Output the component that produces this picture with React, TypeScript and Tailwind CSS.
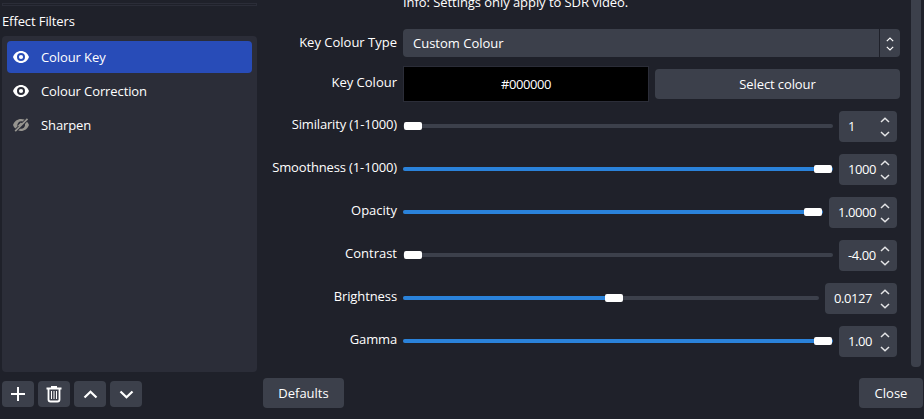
import { clsx } from 'clsx';

interface Filter {
  name: string;
  visible: boolean;
}

interface SliderSetting {
  label: string;
  value: string;
  percent: number;
  spinClass: string;
  labelClass: string;
}

const filters: Filter[] = [
  { name: 'Colour Key', visible: true },
  { name: 'Colour Correction', visible: true },
  { name: 'Sharpen', visible: false },
];

const settings: SliderSetting[] = [
  { label: 'Similarity (1-1000)', value: '1', percent: 0, spinClass: 'w-[58px]', labelClass: 'tracking-[-0.16px]' },
  { label: 'Smoothness (1-1000)', value: '1000', percent: 100, spinClass: 'w-[58px]', labelClass: 'tracking-[-0.14px]' },
  { label: 'Opacity', value: '1.0000', percent: 100, spinClass: 'w-[68px]', labelClass: '' },
  { label: 'Contrast', value: '-4.00', percent: 0, spinClass: 'w-[58px]', labelClass: '' },
  { label: 'Brightness', value: '0.0127', percent: 50.8, spinClass: 'w-[72px]', labelClass: 'tracking-[-0.1px]' },
  { label: 'Gamma', value: '1.00', percent: 100, spinClass: 'w-[58px]', labelClass: 'tracking-[-0.15px]' },
];

const buttonClass = 'flex items-center justify-center rounded-[4px] bg-[#3c404b]';

function Chevron({ up = false, className }: { up?: boolean; className?: string }) {
  return (
    <svg viewBox="0 0 10 6" fill="none" stroke="currentColor" className={className}>
      <path d={up ? 'M1 5 5 1.2 9 5' : 'M1 1 5 4.8 9 1'} strokeWidth="1.5" />
    </svg>
  );
}

function EyeIcon() {
  return (
    <svg viewBox="0 0 16 12" className="h-3 w-4 shrink-0">
      <path
        fill="white"
        fillRule="evenodd"
        d="M8 0C4.400 0 1.300 2.300 0 6c1.300 3.700 4.400 6 8 6s6.700-2.300 8-6C14.700 2.300 11.600 0 8 0Zm0 2a4 4 0 1 1 0 8 4 4 0 0 1 0-8Z"
      />
      <circle cx="8" cy="6" r="2.1" fill="white" />
    </svg>
  );
}

function EyeOffIcon() {
  return (
    <svg viewBox="0 0 16 14" className="h-3.5 w-4 shrink-0 text-[#96948f]">
      <path
        fill="currentColor"
        d="M11.600 1.600C10.500 1.200 9.300 1 8 1 4.400 1 1.300 3.300 0 7c.5 1.500 1.300 2.700 2.300 3.600L4.500 8.500A4 4 0 0 1 9.500 3.500Z"
      />
      <path
        fill="currentColor"
        d="M14 3.700c.9.900 1.600 2 2 3.300-1.300 3.700-4.400 6-8 6-1 0-1.900-.2-2.800-.5l1.900-1.800A4 4 0 0 0 12 6Z"
      />
      <path d="M2.200 13.200 14.500.8M5.500 8 8.500 5" stroke="currentColor" strokeWidth="1.700" fill="none" />
    </svg>
  );
}

function TrashIcon() {
  return (
    <svg viewBox="0 0 16 17" fill="none" stroke="white" className="h-[17px] w-4">
      <path d="M.5 2.500h15M5 1h6" strokeWidth="1.900" />
      <path d="M2.500 3v10.500q0 2 2 2h7q2 0 2-2V3" strokeWidth="1.800" />
      <path d="M5.500 5v8M8 5v8M10.500 5v8" strokeWidth="1" />
    </svg>
  );
}

function FilterList() {
  return (
    <div className="flex h-[336px] flex-col gap-0.5 rounded-[4px] bg-[#2b2d38] p-[5px]">
      {filters.map((filter, index) => (
        <div
          key={filter.name}
          className={clsx('flex h-8 items-center rounded-[4px] pl-1.5', index === 0 && 'bg-[#284cb8]')}
        >
          {filter.visible ? <EyeIcon /> : <EyeOffIcon />}
          <span className="pb-px pl-3 tracking-[-0.1px]">{filter.name}</span>
        </div>
      ))}
    </div>
  );
}

function Slider({ percent }: { percent: number }) {
  return (
    <div className="relative mb-px h-1 min-w-0 flex-1 rounded-full bg-[#3c404b]">
      <div className="h-1 rounded-full bg-[#2a82da]" style={{ width: `${percent}%` }} />
      <div className="absolute -top-0.5 right-[19px] left-px">
        <div className="h-2 w-[18px] rounded-[2px] bg-white" style={{ marginLeft: `${percent}%` }} />
      </div>
    </div>
  );
}

function SettingRow({ label, value, percent, spinClass, labelClass }: SliderSetting) {
  return (
    <div className="flex h-[31px] items-center">
      <div className={clsx('w-[134px] pb-1.5 text-right', labelClass)}>{label}</div>
      <div className="ml-1.5 flex w-[494px] items-center gap-1.5">
        <Slider percent={percent} />
        <div className={clsx('flex h-[31px] items-center rounded-[4px] bg-[#3c404b] pr-[7px] pl-[9px]', spinClass)}>
          <span className="flex-1 pb-px tracking-[-0.45px]">{value}</span>
          <div className="flex flex-col gap-2 text-[#e4e4e6]">
            <Chevron up className="h-1.5 w-2.5" />
            <Chevron className="h-1.5 w-2.5" />
          </div>
        </div>
      </div>
    </div>
  );
}

export default function App() {
  return (
    <div className="flex h-[419px] w-[924px] overflow-hidden bg-[#1f212a] font-['Open_Sans',sans-serif] text-[13px] leading-[18px] whitespace-nowrap text-white">
      <aside className="ml-0.5 w-[255px] pt-[3px]">
        <div className="h-[3px] border border-[#2b2d38]" />
        <h2 className="mt-1.5 mb-1.5 h-[18px] tracking-[-0.1px]">Effect Filters</h2>
        <FilterList />
        <div className="mt-[9px] flex gap-1">
          <button className={clsx(buttonClass, 'h-[26px] w-8')}>
            <svg viewBox="0 0 14 14" className="size-3.5" stroke="white" strokeWidth="2">
              <path d="M7 0v14M0 7h14" />
            </svg>
          </button>
          <button className={clsx(buttonClass, 'h-[26px] w-8')}>
            <TrashIcon />
          </button>
          <button className={clsx(buttonClass, 'h-[26px] w-8')}>
            <Chevron up className="h-[9px] w-[15px]" />
          </button>
          <button className={clsx(buttonClass, 'h-[26px] w-8')}>
            <Chevron className="h-[9px] w-[15px]" />
          </button>
        </div>
      </aside>

      <main className="ml-1.5 flex w-[661px] flex-1 flex-col">
        <div className="flex h-[367px]">
          <div className="w-[648px]">
            <p className="-mt-[7px] ml-[140px] h-[18px] tracking-[-0.06px]">Info: Settings only apply to SDR video.</p>
            <div className="mt-[18px] flex h-7 items-center">
              <div className="w-[134px] pb-0.5 text-right">Key Colour Type</div>
              <div className="ml-1.5 flex h-7 w-[497px] gap-px">
                <div className="flex flex-1 items-center rounded-l-[4px] bg-[#3c404b] pl-2.5">Custom Colour</div>
                <div className="flex w-5 flex-col items-center justify-center gap-1 rounded-r-[4px] bg-[#3c404b] pt-px">
                  <Chevron up className="h-[5px] w-2" />
                  <Chevron className="h-[5px] w-2" />
                </div>
              </div>
            </div>
            <div className="mt-[9px] flex h-9 items-center">
              <div className="w-[134px] pb-1 text-right">Key Colour</div>
              <div className="ml-1.5 flex h-9 w-[246px] items-center justify-center border border-[#2b2d38] bg-black tracking-[-0.45px]">
                #000000
              </div>
              <button className={clsx(buttonClass, 'ml-1.5 h-[30px] w-[245px] tracking-[-0.1px]')}>Select colour</button>
            </div>
            <div className="mt-[9px] flex flex-col gap-3">
              {settings.map((setting) => (
                <SettingRow key={setting.label} {...setting} />
              ))}
            </div>
          </div>
          <div className="h-[367px] w-2.5 rounded-b-[4px] bg-[#3c404b]" />
        </div>
        <div className="mt-[11px] mr-px flex justify-between">
          <button className={clsx(buttonClass, 'h-[30px] w-[81px]')}>Defaults</button>
          <button className={clsx(buttonClass, 'h-[30px] w-16')}>Close</button>
        </div>
      </main>
    </div>
  );
}
